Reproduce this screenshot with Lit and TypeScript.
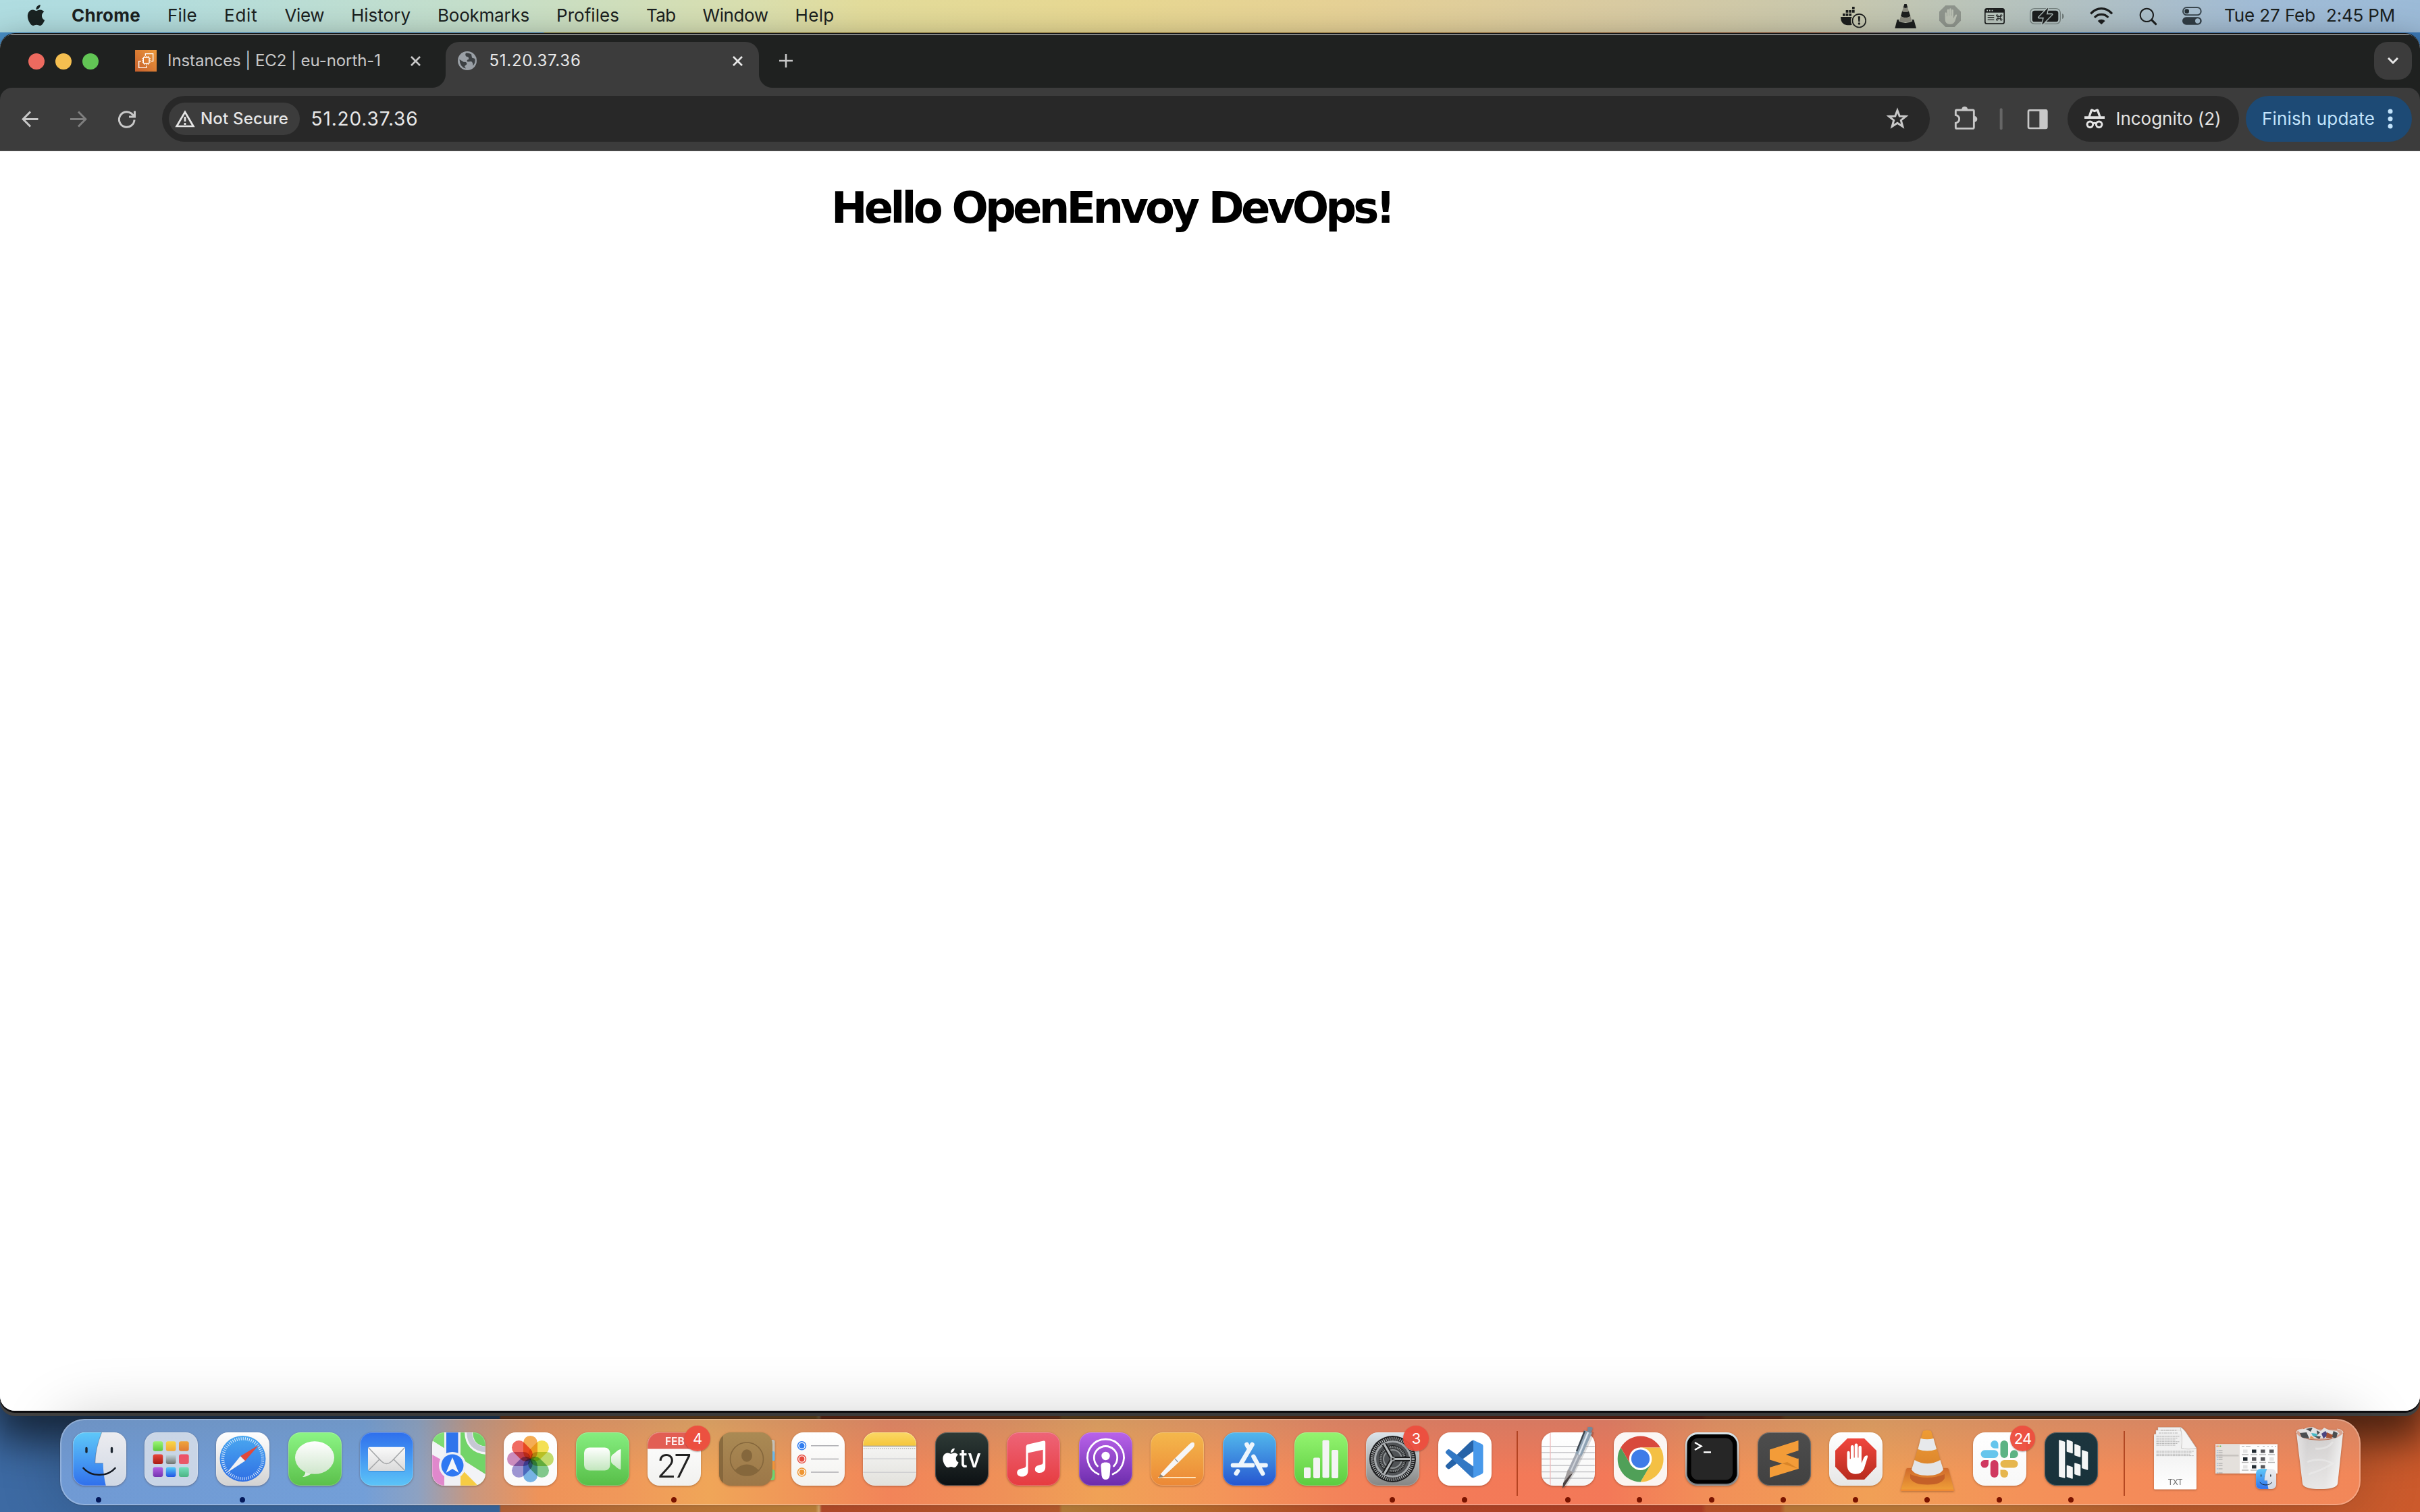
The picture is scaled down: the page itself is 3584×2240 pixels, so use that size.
import { LitElement, html, svg, css } from "lit";
import { customElement, property } from "lit/decorators.js";

/* A single line of text whose tracking is adjusted to fill a set width. */
@customElement("fit-label")
class FitLabel extends LitElement {
  @property({ type: Number }) w = 100;
  @property() text = "";
  static styles = css`
    :host { display: block; flex: none; }
    .box { display: block; white-space: pre; }
    .run { display: inline-block; white-space: pre; }
  `;
  render() {
    return html`<span class="box" style="width:${this.w}px"><span class="run">${this.text}</span></span>`;
  }
  firstUpdated() {
    const run = this.renderRoot.querySelector(".run") as HTMLElement;
    const natural = run.getBoundingClientRect().width;
    if (natural > 0) run.style.letterSpacing = (this.w - natural) / this.text.length + "px";
  }
}

const applePath =
  "M12.152 6.896c-.948 0-2.415-1.078-3.96-1.04-2.04.027-3.91 1.183-4.961 3.014-2.117 3.675-.546 9.103 1.519 12.09 1.013 1.454 2.208 3.09 3.792 3.039 1.52-.065 2.09-.987 3.935-.987 1.831 0 2.35.987 3.96.948 1.637-.026 2.676-1.48 3.676-2.948 1.156-1.688 1.636-3.325 1.662-3.415-.039-.013-3.182-1.221-3.22-4.857-.026-3.04 2.48-4.494 2.597-4.559-1.429-2.09-3.623-2.324-4.39-2.376-2-.156-3.675 1.09-4.61 1.09zM15.53 3.83c.843-1.012 1.4-2.427 1.245-3.83-1.207.052-2.662.805-3.532 1.818-.78.896-1.454 2.338-1.273 3.714 1.338.104 2.715-.688 3.559-1.701";

/* Open hand, drawn in a 34 x 56 box. */
const handPath =
  "M0 18 Q0 14 2.2 14 Q4.6 14 4.6 18 V28 H6 V7 Q6 3 8.6 3 Q11.2 3 11.2 7 V26 H12.4 V4 Q12.4 0 15 0 Q17.6 0 17.6 4 V26 H18.8 V8 Q18.8 4 21.4 4 Q23.8 4 23.8 8 V36 Q26 30 28 25 Q30 21 33.4 22 Q34.6 23 33.6 26 L28 46 Q24 56 14 56 Q0 55 0 38 Z";

const menus: [string, number][] = [
  ["File", 44], ["Edit", 49.5], ["View", 58.5], ["History", 88], ["Bookmarks", 136],
  ["Profiles", 93], ["Tab", 43.5], ["Window", 97], ["Help", 58],
];

const grad = (id: string, a: string, b: string) => svg`
  <linearGradient id=${id} x1="0" y1="0" x2="0" y2="1">
    <stop offset="0" stop-color=${a}></stop><stop offset="1" stop-color=${b}></stop>
  </linearGradient>`;

const tile = (id: string, a: string, b: string, art: unknown) => svg`
  <defs>${grad(id, a, b)}<clipPath id="tileclip"><rect width="79" height="79" rx="18"></rect></clipPath></defs>
  <rect width="79" height="79" rx="18" fill="url(#${id})"></rect>
  <g clip-path="url(#tileclip)">${art}</g>
  <rect x=".5" y=".5" width="78" height="78" rx="17.5" fill="none" stroke="#fff" stroke-opacity=".22"></rect>`;

const finderArt = svg`
  <defs>${grad("fb", "#5ec8f9", "#3070ec")}</defs>
  <path d="M0 0 H42.7 Q33 24 32.8 45.8 H44.7 Q45 64 48.8 79 H0 Z" fill="url(#fb)"></path>
  <path d="M42.7 0 Q33 24 32.8 45.8 H44.7" fill="none" stroke="#2a3c55" stroke-opacity=".35" stroke-width="1"></path>
  <path d="M20 23.5 V29 M57.5 23.5 V29" stroke="#1c2530" stroke-width="3.4" stroke-linecap="round"></path>
  <path d="M15.5 53 Q24 63 39 63 Q54 63 62.5 53" fill="none" stroke="#151b24" stroke-width="2.6" stroke-linecap="round"></path>`;
const finder = tile("fw", "#ececf0", "#d0d8e4", finderArt);

const padColors = [
  ["#9bf575", "#5cc83c"], ["#f8d748", "#f0a838"], ["#efa43c", "#e07a34"],
  ["#e8483c", "#a81c14"], ["#c8dce4", "#707470"], ["#ee5068", "#e85868"],
  ["#b460e4", "#7434b0"], ["#54ccf8", "#2454e4"], ["#74e0bc", "#4cb484"],
];
const launchpad = tile("lp", "#cad6e6", "#c8d4e6", padColors.map((c, i) => svg`
  <defs>${grad("lp" + i, c[0], c[1])}</defs>
  <rect x=${12.6 + (i % 3) * 19.2} y=${13.3 + Math.floor(i / 3) * 19.1} width="14.7" height="14.5" rx="3" fill="url(#lp${i})"></rect>`));

const safari = tile("sf", "#ffffff", "#d2d2d2", svg`
  <defs>${grad("sfc", "#4aa8f0", "#2f6fe4")}</defs>
  <circle cx="39.5" cy="39" r="34" fill="url(#sfc)"></circle>
  <circle cx="39.5" cy="39" r="29.6" fill="none" stroke="#fff" stroke-opacity=".85" stroke-width="4.6" stroke-dasharray="1 2.1"></circle>
  <path d="M63 19 L36 35.2 L43 42.2 Z" fill="#e2483a"></path>
  <path d="M16 60 L36 35.2 L43 42.2 Z" fill="#f2f2f4"></path>`);

const messages = tile("ms", "#8cf585", "#5bc04b", svg`
  <defs>${grad("msb", "#ffffff", "#cfe6cc")}</defs>
  <path d="M21 66 Q26 63 25 57 L34 61 Q28 66 21 66 Z" fill="#e4f2e2"></path>
  <ellipse cx="39" cy="37.5" rx="29" ry="24.3" fill="url(#msb)"></ellipse>`);

const mail = tile("ml", "#2f6fec", "#5cc4f8", svg`
  <defs>${grad("mle", "#fafafa", "#dadada")}</defs>
  <rect x="12" y="23.5" width="55" height="35" rx="2.5" fill="#1c5fb0" opacity=".3"></rect>
  <rect x="12" y="21.7" width="55" height="35.4" rx="2.5" fill="url(#mle)"></rect>
  <path d="M13 23 L32 43 Q39.500 50 47 43 L66 23 M13 56 L29 40 M66 56 L50 40" fill="none" stroke="#a2a4a6" stroke-width="1.5"></path>`);

const maps = tile("mp", "#82e078", "#6cc85c", svg`
  <path d="M0 12 L79 62 V79 H0 Z" fill="#f2f3f6"></path>
  <path d="M0 33 L18 43 V79 H0 Z" fill="#e088cc"></path>
  <path d="M42 53 L68 79 H42 Z" fill="#f6cc44"></path>
  <path d="M42 0 H79 V60 L42 36 Z" fill="#72d468"></path>
  <rect x="18" width="24" height="79" fill="#f0f0f4"></rect>
  <rect x="21" width="17.500" height="40" fill="#2f74ec"></rect>
  <path d="M54 -2 Q54 25 81 27" fill="none" stroke="#f4f4f8" stroke-width="12"></path>
  <path d="M55 -2 Q55 24 81 25.500" fill="none" stroke="#c6c8d4" stroke-width="8"></path>
  <circle cx="30" cy="49" r="18.5" fill="#d4dcf0"></circle>
  <circle cx="30" cy="49" r="20" fill="#eef0f6"></circle>
  <circle cx="30" cy="49" r="16.500" fill="#2f78f2"></circle>
  <path d="M30 37 L39.500 60 L30 54 L20.500 60 Z" fill="#f4f6fa"></path>`);

const petals = ["#f4a03c", "#f2dc3c", "#b8d658", "#70c07c", "#64a8e0", "#8f86cc", "#c47cb4", "#ee564c"];
const photos = tile("ph", "#ffffff", "#fafafa", petals.map((c, i) => svg`
  <rect class="petal" x="29" y="5" width="21" height="35" rx="10.5" fill=${c} fill-opacity=".88" transform="rotate(${i * 45} 39.5 39.5)"></rect>`));

const facetime = tile("ft", "#86ee80", "#57be48", svg`
  <defs>${grad("ftb", "#ffffff", "#c2e6bd")}</defs>
  <rect x="12" y="22.500" width="38.5" height="34" rx="8" fill="url(#ftb)"></rect>
  <path d="M66.500 25 V55 Q63 55 57 49 Q52 46 52 43 V37 Q52 34 57 31 Q63 25 66.500 25 Z" fill="url(#ftb)"></path>`);

const calendar = tile("cl", "#ffffff", "#f1f1ef", svg`
  <rect width="79" height="24.500" fill="#e25e54"></rect>
  <text class="t600" x="26" y="18.500" font-size="15.500" fill="#fdeceb">FEB</text>
  <text class="t300" x="39.500" y="66.500" font-size="47.500" text-anchor="middle" textLength="52" fill="#222">27</text>`);

const contacts = svg`
  <rect x="70" y="11" width="12.5" height="22" rx="3" fill="#c4bfb6"></rect>
  <rect x="70" y="28" width="12.5" height="15" rx="3" fill="#6db8e8"></rect>
  <rect x="70" y="42" width="12.5" height="15" rx="3" fill="#f0943a"></rect>
  <rect x="70" y="55" width="12.500" height="16" rx="4" fill="#6ed470"></rect>
  <defs>${grad("ct", "#aa8a54", "#9c7748")}</defs>
  <rect width="79" height="79" rx="18" fill="url(#ct)"></rect>
  <path d="M6 5 Q0 10 0 18 V61 Q0 70 6 75 Z" fill="#7f6238" opacity=".75"></path>
  <g fill="none" stroke="#85673c" stroke-width="1.600"><circle cx="41" cy="39.500" r="24.500"></circle></g>
  <ellipse cx="41" cy="34.500" rx="8" ry="9.300" fill="#85673c"></ellipse>
  <path d="M23.500 56 Q31 47.500 41 47.500 Q51 47.500 58.500 56 Q51 64 41 64 Q31 64 23.500 56 Z" fill="#85673c"></path>`;

const reminders = tile("rm", "#ffffff", "#f3f2ef", [["#2f7cf0", 19.8], ["#e64b3e", 39.5], ["#ee9634", 59]].map(([c, y]) => svg`
  <circle cx="15.500" cy=${y} r="6" fill="#fff" stroke=${c} stroke-width="1.500"></circle>
  <circle cx="15.500" cy=${y} r="3.900" fill=${c}></circle>
  <rect x="29" y=${(y as number) - 0.8} width="41" height="1.600" fill="#b2b2b6"></rect>`));

const notes = tile("nt", "#fbfbfb", "#e2e1dc", svg`
  <defs>${grad("nty", "#fbd866", "#f5c63a")}</defs>
  <rect width="79" height="20" fill="url(#nty)"></rect>
  <rect y="19.600" width="79" height="1.700" fill="#b0aca0"></rect>
  <path d="M1 24 H79" stroke="#b4b4b0" stroke-width="1.400" stroke-dasharray="1.400 1.600"></path>
  <path d="M0 39.300 H79 M0 59.300 H79" stroke="#d0d0d2" stroke-width="1.400"></path>`);

const tv = tile("tv", "#2e3b37", "#0c1013", svg`
  <g transform="translate(8.700 23.500) scale(1.190)"><path d=${applePath} fill="#fff"></path></g>
  <text class="t500" x="36" y="52" font-size="38" textLength="32" lengthAdjust="spacingAndGlyphs" fill="#fff">tv</text>`);

const music = tile("mu", "#ee6478", "#e63c40", svg`
  <path d="M28.500 22 Q28.500 18.600 31.500 17.800 L54.500 12.600 Q57.200 12 57.200 14.800 V51.500 C57.200 57 53.500 60 48.500 60 C44 60 41.800 57.600 41.800 54.500 C41.800 49.500 47.500 48.600 51 47.800 Q53.600 47.200 53.600 44.500 V25.800 L31.500 30.500 V57 C31.500 62.500 28 65.600 22.800 65.600 C18 65.600 15.200 63 15.200 60 C15.200 55 20 54 24.500 53 Q28.500 52.200 28.500 49 Z" fill="#fff"></path>`);

const podcasts = tile("pc", "#b963ea", "#6c2cac", svg`
  <g fill="none" stroke="#fff" stroke-width="2.800" stroke-linecap="round">
    <path d="M29 62 A27 27 0 1 1 50 62"></path>
    <path d="M27.500 50 A17.200 17.200 0 1 1 51.500 50"></path>
  </g>
  <circle cx="39.500" cy="35" r="6.200" fill="#fff"></circle>
  <path d="M39.500 44.500 C45 44.500 47 46.500 46.500 51 L45.500 64 Q44.500 70 39.500 70 Q34.500 70 33.500 64 L32.500 51 C32 46.500 34 44.500 39.500 44.500 Z" fill="#fff"></path>`);

const pages = tile("pg", "#f4b84c", "#ec8836", svg`
  <path d="M12 67 H66" stroke="#ffe2b8" stroke-width="2.200" stroke-linecap="round"></path>
  <path d="M64 15.500 L17 64 L12 67 L14 61.500 L38 37 Z" fill="#a85c18" opacity=".25" transform="translate(3 2)"></path>
  <path d="M58 17 Q62 13.500 64.500 15.500 Q66 19 63 23 L41 45 L19 65.500 L14.500 62 L35 39.500 Z" fill="#f6f6f6"></path>
  <path d="M14.500 62 L19 65.500 L12 67.500 Z" fill="#8d8477"></path>
  <path d="M36 39 L40.500 44" stroke="#9a9a9a" stroke-width="1.400"></path>`);

const appstore = tile("as", "#52b8ec", "#2656d0", svg`
  <g stroke="#eef6fc" stroke-width="6.600" stroke-linecap="round" fill="none">
    <path d="M43.500 18 L26.500 47"></path><path d="M35.500 18 L37 21"></path>
    <path d="M45.500 36 L59 61"></path><path d="M15 48.700 H44 M54 48.700 H63.500"></path>
    <path d="M22 57.500 L19.800 60.800"></path>
  </g>`);

const numbers = tile("nb", "#94f470", "#5ccc40", [[14, 52, 16], [28, 37.5, 30.5], [41.5, 11.5, 56], [55, 26, 42]].map(([x, y, h]) => svg`
  <rect x=${x} y=${y} width="10" height=${h} rx="2" fill="#f3f4f4"></rect>`));

const settings = tile("st", "#dbe4ea", "#868684", svg`
  <circle cx="39.500" cy="39.500" r="34.500" fill="#1e1f21"></circle>
  <circle cx="39.500" cy="39.500" r="30.300" fill="none" stroke="#b8bcbe" stroke-width="4.400" stroke-dasharray="1.300 1.700"></circle>
  <circle cx="39.500" cy="39.500" r="26" fill="#505356" stroke="#a4a8ab" stroke-width="3.200"></circle>
  <circle cx="39.500" cy="39.500" r="19.500" fill="#3e4042" stroke="#1c1d1e" stroke-width="2"></circle>
  <circle cx="39.500" cy="39.500" r="18" fill="none" stroke="#8c9092" stroke-width="3.200" stroke-dasharray="1.300 1.300"></circle>
  <circle cx="39.500" cy="39.500" r="13.500" fill="#505356" stroke="#909496" stroke-width="2"></circle>
  <path d="M39.500 39.500 H65 M39.500 39.500 L27 17.500 M39.500 39.500 L27 61.500" stroke="#1c1d1e" stroke-width="7"></path>
  <path d="M39.500 39.500 H65 M39.500 39.500 L27 17.500 M39.500 39.500 L27 61.500" stroke="#b6babc" stroke-width="3.200"></path>
  <circle cx="39.500" cy="39.500" r="3.500" fill="#9a9ea0"></circle><circle cx="39.500" cy="39.500" r="1.400" fill="#222"></circle>`);

const vscode = tile("vs", "#ffffff", "#ffffff", svg`
  <path d="M52 11.500 V28 L17 54 Q15 55 13.500 53.500 L11.500 51.500 Q10 49.500 12 48 L47.500 14 Q49.500 12 52 11.500 Z" fill="#2663a8"></path>
  <path d="M52 67.500 V50.500 L17 25.500 Q15 24.500 13.500 26 L11.500 28 Q10 30 12 31.500 L47.500 65 Q49.500 67 52 67.500 Z" fill="#3278c4"></path>
  <path d="M52 11.500 L65 17.500 Q66.500 18.500 66.500 20.500 V58.500 Q66.500 60.500 65 61.500 L52 67.500 Z" fill="#4899ea"></path>`);

const textedit = svg`
  ${tile("te", "#ffffff", "#f6f6f6", svg`
    <path d="M0 20.800 H79 M0 30 H79 M0 39.500 H79 M0 49 H79 M0 58.600 H79 M0 68 H79" stroke="#c2c2c6" stroke-width="1.500"></path>
    <path d="M13 0 V79" stroke="#eebcbc" stroke-width="1.300"></path>`)}
  <path d="M66 -4 L75 -1 L72 8 L46 60 L33.500 79 L30.500 83 L31 77 L38 55 L53 26 Z" fill="#000" opacity=".13" transform="translate(3 1)"></path>
  <path d="M63.500 -3 L75 .5 L59 36 L50 32 Z" fill="#8fa3b4"></path>
  <path d="M68.500 -8 H74 L76 -6 L73 1 L68 -1 Z" fill="#75889a"></path>
  <path d="M64 -2 L52 28" stroke="#3c4650" stroke-width="2.400"></path>
  <path d="M69 0 L55 34" stroke="#dce6f0" stroke-width="2.500"></path>
  <path d="M50.500 31 L59 34.500 L47.500 60 L39 56 Z" fill="#a3a8b2"></path>
  <path d="M54 34 L43.500 57" stroke="#d0d4da" stroke-width="2"></path>
  <path d="M39 55 L47 59.500 L37 75 L32.500 74 Z" fill="#a09c9c"></path>
  <path d="M42 63 L46 61 L34.500 79 L31 83 L32 75 Z" fill="#4c4444"></path>`;

const chrome = tile("ch", "#fbf6f4", "#fbf4f0", svg`
  <path d="M10.300 22.400 A34 34 0 0 1 69 22.400 H39.500 L25 48 Z" fill="#d8493c"></path>
  <path d="M69 22.400 A34 34 0 0 1 39.500 73.500 L54.500 48 L39.500 22.400 Z" fill="#f4c044"></path>
  <path d="M39.500 73.500 A34 34 0 0 1 10.300 22.400 L25 48 L54.500 48 Z" fill="#50a058"></path>
  <circle cx="39.500" cy="39.200" r="16.800" fill="#fff"></circle>
  <circle cx="39.500" cy="39.200" r="13.600" fill="#3f7ce8"></circle>`);

const terminal = tile("tm", "#d6e4ea", "#77797b", svg`
  <rect x="2.500" y="3" width="74" height="73" rx="15.500" fill="#000"></rect>
  <rect x="8.500" y="8.500" width="61.500" height="62" rx="10" fill="#262626"></rect>
  <path d="M14 15 L23.500 20.500 L14 26" fill="none" stroke="#fff" stroke-width="2.500"></path>
  <path d="M27 29.500 H38" stroke="#fff" stroke-width="2.500"></path>`);

const sublime = tile("su", "#4d4d4d", "#414141", svg`
  <path d="M18 25.500 L60.500 12 V27 L42 33 L60.500 39.500 V54 L18 40.500 Z" fill="#f39c38"></path>
  <path d="M18 52 L60.500 38.500 V54 L18 67 Z" fill="#f39c38"></path>
  <path d="M36 46 L60.500 54 L44 44 Z" fill="#d98528"></path>
  <path d="M17 42 L35 46.800 L17 51.500 Z" fill="#474747"></path>`);

const adblock = tile("ab", "#ffffff", "#e6e6e6", svg`
  <defs>${grad("abr", "#f0463e", "#b82c1e")}</defs>
  <path d="M27 9 H52 L70 27 V51 L52 70 H27 L9 51 V27 Z" fill="url(#abr)"></path>
  <path d=${handPath} fill="#fff" transform="translate(26.500 16.500) scale(.9 .81)"></path>`);

const vlc = svg`
  <defs>${grad("vlb", "#d06a2c", "#f0a038")}${grad("vlo", "#ee9c34", "#d8802c")}</defs>
  <path d="M10 53 H69 Q70.500 53 71 55 L79 86 H0 L8 55 Q8.500 53 10 53 Z" fill="url(#vlb)"></path>
  <path d="M14 62 Q39 72 65 62 V68 Q60 77.500 39.500 77.500 Q19 77.500 14 68 Z" fill="#c46028"></path>
  <path d="M33 -2 Q39 -4 45 -2 L63 55 Q58 64 39.500 64 Q21 64 16 55 Z" fill="url(#vlo)"></path>
  <path d="M29.500 9 Q39 11.500 48.500 9 L53 25 Q39 30 25.500 25 Z" fill="#e7e9eb"></path>
  <path d="M20.500 41 Q39 51.500 58.500 41 L63 55 Q58 64 39.500 64 Q21 64 16 55 Z" fill="#e3e5e8"></path>
  <path d="M0 84.500 H79 V87 H0 Z" fill="#ee8a34"></path>`;

const slack = tile("sl", "#ffffff", "#f8f8f8", svg`
  <g fill="#66c5ec"><path d="M32 12 A5.800 5.800 0 0 0 32 23.800 H37.500 V18 A5.700 5.700 0 0 0 32 12 Z"></path><rect x="11.500" y="26.200" width="26" height="11.800" rx="5.900"></rect></g>
  <g fill="#5cb384"><rect x="40.500" y="12" width="11.500" height="26" rx="5.750"></rect><path d="M55 38 V32 A5.900 5.900 0 1 1 61 38 Z"></path></g>
  <g fill="#e6b64e"><rect x="40.500" y="41" width="26" height="11.500" rx="5.750"></rect><path d="M40.500 55.500 H46.500 A5.800 5.800 0 1 1 40.500 61.500 Z"></path></g>
  <g fill="#d03860"><rect x="25.800" y="41" width="11.700" height="26" rx="5.800"></rect><path d="M23 41 V47 A5.800 5.800 0 1 1 17 41 Z"></path></g>`);

const dashlane = tile("dl", "#1c353e", "#18323b", svg`
  <g fill="#f4f6f6" stroke="#f4f6f6" stroke-width="1.600" stroke-linejoin="round">
    <path d="M22 12 L29.500 14.500 V67 L22 65 Z"></path>
    <path d="M33.500 11.500 L41 14.500 V30.500 L33.500 28 Z"></path>
    <path d="M45 18 L52.500 21 V36 L45 33.500 Z"></path>
    <path d="M56 27 L63.500 29.500 V55 L56 52.500 Z"></path>
    <path d="M45 46 L52.500 48.500 V64 L45 61.500 Z"></path>
    <path d="M33.500 49.500 L41 52 V68 L33.500 65.500 Z"></path>
  </g>`);

const rows = (x: number, y: number, w: number, n: number, step: number) =>
  Array.from({ length: n }, (_, i) => svg`<path d="M${x} ${y + i * step} h${w - (i % 3) * 3}" stroke="#9a9a9a" stroke-width=".7" stroke-dasharray="4 .8 2.500 .7"></path>`);

const txt = svg`
  <defs>${grad("tx", "#ececec", "#ffffff")}</defs>
  <path d="M14 -7.500 H48 L62 12 V40 H14 Z" fill="#f0f0f0" stroke="#c8c0bc" stroke-width=".5"></path>
  <path d="M11 -3 H47 L66 20 V60 H11 Z" fill="#f2f2f2" stroke="#c8c0bc" stroke-width=".5"></path>
  <path d="M9 2.500 H48 V24 H71 V83 Q71 84.500 69.500 84.500 H9.500 Q8 84.500 8 83 V4 Q8 2.500 9 2.500 Z" fill="url(#tx)"></path>
  ${rows(18, -3, 24, 1, 2)}${rows(15, 1, 28, 1, 2)}${rows(11.5, 6, 34, 6, 2.6)}${rows(11.5, 28, 56, 4, 2.2)}
  <path d="M47 -7.500 Q52 -6 58 4 L71 23.500 Q58 26 48.500 23.500 Q51 8 47 -7.500 Z" fill="#f4f4f4" stroke="#b8b4b0" stroke-width=".7"></path>
  <text class="t400" x="39.500" y="78" font-size="11.800" text-anchor="middle" textLength="22" fill="#6e6e6e">TXT</text>`;

const windowThumb = svg`
  <rect x="-7" y="17.500" width="92" height="43.500" fill="#fdfdfd"></rect>
  <rect x="-7" y="17.500" width="36" height="43.500" fill="#e4e0dc"></rect>
  <circle cx="-4.500" cy="20.500" r="1" fill="#e8584c"></circle><circle cx="-2" cy="20.500" r="1" fill="#f0b83c"></circle><circle cx=".5" cy="20.500" r="1" fill="#58b84c"></circle>
  <rect x="-6" y="33" width="33.500" height="2.600" fill="#c8c4c0"></rect>
  ${[27, 30, 33.500, 37, 40, 46, 49, 54, 60].map((y) => svg`<path d="M-5 ${y} h1.500" stroke="#58a0e0" stroke-width="1"></path><path d="M-2.500 ${y} h6" stroke="#9a9a9a" stroke-width=".9"></path>`)}
  <path d="M32 20.500 h4 M38 20.500 h7 M55 20.500 h3 M63 20.500 h3 M70 20.500 h2 M76 20.500 h2 M81 20.500 h2" stroke="#a8a8a8" stroke-width="1"></path>
  ${[0, 1, 2, 3].map((c) => [0, 1, 2].map((r) => (c === 3 && r === 2) ? "" : svg`
    <rect x=${34 + c * 13} y=${25.500 + r * 11.500} width="6.500" height="5" fill=${(c === 0 && r === 1) || (c === 1 && r !== 1) ? "#222b32" : (c === 0 || (c === 3 && r === 1) ? "#e4e4e4" : "#58585c")}></rect>
    <path d="M${32 + c * 13} ${33 + r * 11.500} h10" stroke="#b4b4b4" stroke-width="1.400"></path>`))}
  <g transform="translate(53 54) scale(.38)">${finder}</g>`;

const trash = svg`
  <defs>
    <linearGradient id="tr" x1="0" y1="0" x2="1" y2=".1"><stop offset="0" stop-color="#e4e2e2"></stop><stop offset=".25" stop-color="#cfcdcd"></stop><stop offset=".7" stop-color="#d2cfce"></stop><stop offset="1" stop-color="#ececec"></stop></linearGradient>
    ${grad("trb", "rgba(255,255,255,0)", "rgba(255,255,255,.5)")}
  </defs>
  <path d="M6 0 Q6 -4 14 -5 L70 -4 Q75 -2 75 1 Q72 10 40 11 Q8 10 6 0 Z" fill="#d7a592"></path>
  <path d="M8 -3 L17 -5 L22 -7 L30 -8 L36 -5 L42 -2 L47 -7 L55 -3 L66 -2 L70 2 L60 9 H20 Z" fill="#e2e2e2"></path>
  <path d="M20 -5 L30 -7 L27 -1 Z M11 1 L21 0 L25 9 L14 8 Z M61 -2 L67 1 L65 9 L58 7 Z M36 -3 L41 0 L37 4 Z M30 5 L42 6 L40 10 Z" fill="#4a4e50"></path>
  <path d="M28 1 L36 2 L37 6 L30 5 Z" fill="#46b8c4"></path><path d="M27 5 L33 9 H26 Z" fill="#e4904c"></path>
  <path d="M43 2 L49 -2 L53 4 L46 9 Z" fill="#4c4680"></path><path d="M51 0 L60 4 L58 9 L50 8 Z" fill="#a85434"></path>
  <path d="M6 1 Q12 11 40 12 Q68 11 75 1 L67 76 Q65 84 41 84 Q17 84 15 76 Z" fill="url(#tr)"></path>
  <path d="M6 1 Q12 11 40 12 Q68 11 75 1 L67 76 Q65 84 41 84 Q17 84 15 76 Z" fill="url(#trb)"></path>
  <path d="M34 24 Q52 26 60 14 M22 44 Q40 36 60 46 Q44 56 24 62" fill="none" stroke="#eee" stroke-width="3" opacity=".5"></path>
  <path d="M6 1 Q6 -5 16 -5 M66 -5 Q75 -4 75 1" fill="none" stroke="#ece6e4" stroke-width="1.200" opacity=".8"></path>`;

interface App { art: unknown; run?: boolean; badge?: string }
const groups: App[][] = [
  [
    { art: finder, run: true }, { art: launchpad }, { art: safari, run: true }, { art: messages }, { art: mail },
    { art: maps }, { art: photos }, { art: facetime }, { art: calendar, run: true, badge: "4" }, { art: contacts },
    { art: reminders }, { art: notes }, { art: tv }, { art: music }, { art: podcasts }, { art: pages },
    { art: appstore }, { art: numbers }, { art: settings, run: true, badge: "3" }, { art: vscode, run: true },
  ],
  [
    { art: textedit, run: true }, { art: chrome, run: true }, { art: terminal, run: true }, { art: sublime, run: true },
    { art: adblock, run: true }, { art: vlc, run: true }, { art: slack, run: true, badge: "24" }, { art: dashlane, run: true },
  ],
  [{ art: txt }, { art: windowThumb }, { art: trash }],
];

@customElement("dock-item")
class DockItem extends LitElement {
  @property({ attribute: false }) app: App = { art: "" };
  static styles = css`
    :host { display: block; width: 79px; flex: none; }
    .item { display: flex; flex-direction: column; align-items: center; gap: 17.500px; position: relative; }
    .art { width: 79px; height: 79px; overflow: visible; filter: drop-shadow(0 1.500px 1.500px rgba(60, 20, 0, 0.35)); }
    .dot { width: 8px; height: 8px; border-radius: 50%; background: var(--dot, #7a1400); margin-right: 1.500px; }
    .badge { position: absolute; left: 55px; top: -9.500px; width: 37.500px; height: 37.500px; border-radius: 50%; background: rgba(236, 78, 62, 0.96); color: #fff; display: flex; align-items: center; justify-content: center; font: 400 22px/1 Inter, "Liberation Sans", sans-serif; letter-spacing: -0.800px; box-shadow: 0 1px 2px rgba(0, 0, 0, 0.3); }
    .petal { mix-blend-mode: multiply; }
    text { font-family: Inter, "Liberation Sans", sans-serif; }
    .t300 { font-weight: 300; } .t400 { font-weight: 400; } .t500 { font-weight: 500; } .t600 { font-weight: 700; }
  `;
  render() {
    const a = this.app;
    return html`<div class="item">
      <svg class="art" viewBox="0 0 79 79">${a.art}</svg>
      ${a.run ? html`<span class="dot"></span>` : ""}
      ${a.badge ? html`<span class="badge">${a.badge}</span>` : ""}
    </div>`;
  }
}

@customElement("mac-dock")
class MacDock extends LitElement {
  static styles = css`
    :host { display: block; }
    .dock { box-sizing: border-box; display: flex; gap: 27.450px; height: 128px; width: 3407px; margin-left: 88.500px; padding: 17.500px 0 0 17px; border-radius: 36px; border: 2px solid rgba(255, 255, 255, 0.24); background-clip: border-box; background-origin: border-box;
      background-image: linear-gradient(180deg, rgba(110, 120, 130, 0.22), rgba(255, 140, 90, 0.02) 65%), linear-gradient(90deg, #6d9ad6 0, #709fda 450px, #8ba2c4 530px, #c8977f 610px, #ef9359 710px, #f0985a 830px, #f0a658 960px, #f09558 1100px, #f28459 1230px, #ef9158 1400px, #f0a256 1540px, #f49559 1720px, #f3845a 1880px, #f37a58 2060px, #f37858 2290px, #f29058 2450px, #f1a056 2680px, #f49259 2900px, #f48a59 3100px, #f28759 3408px);
      box-shadow: 0 0 1px 1px rgba(40, 20, 10, 0.15), 0 0 90px rgba(0, 0, 0, 0.22); }
    .rule { width: 2px; height: 96px; margin: -1.500px 7.500px 0 10px; background: rgba(160, 50, 15, 0.75); flex: none; }
    .cool { --dot: #04195a; }
  `;
  render() {
    return html`<div class="dock">
      ${groups.map((g, gi) => html`${gi ? html`<span class="rule"></span>` : ""}${g.map((a, i) => html`<dock-item class=${gi === 0 && i < 3 ? "cool" : ""} .app=${a}></dock-item>`)}`)}
    </div>`;
  }
}

@customElement("menu-bar")
class MenuBar extends LitElement {
  static styles = css`
    :host { display: block; }
    .bar { box-sizing: border-box; height: 48px; padding: 0 37px 0 38px; display: flex; align-items: center; color: #1b211f; font: 400 26px/40px Inter, "Liberation Sans", sans-serif;
      background: linear-gradient(90deg, #b0dde1 0, #b2dddf 200px, #c5dfcb 700px, #dadfae 1120px, #e3dc9b 1280px, #e8d892 1650px, #e6d196 2000px, #d9cba2 2400px, #c8c8ae 2720px, #b8c4bd 2960px, #acbfca 3180px, #a1bcd6 3340px, #9cbbd8 3584px); }
    .left { display: flex; gap: 40px; padding-bottom: 3px; }
    .apple { width: 31px; height: 31px; margin: -4px 37px 0 0; flex: none; }
    .bold { font-weight: 700; }
    .right { display: flex; align-items: center; margin-left: auto; }
    .icons { width: 546px; height: 48px; flex: none; }
    .clock { display: flex; gap: 16px; margin-left: 28px; padding-bottom: 3px; }
  `;
  render() {
    return html`<div class="bar">
      <svg class="apple" viewBox="0 0 24 24"><path d=${applePath} fill="#1a2322"></path></svg>
      <div class="left">
        <fit-label class="bold" text="Chrome" w="102"></fit-label>
        ${menus.map(([t, w]) => html`<fit-label text=${t} w=${w}></fit-label>`)}
      </div>
      <div class="right">
        <svg class="icons" viewBox="0 0 1638 144" fill="#1c1e1e">
          <path d="M27 60h11v11H27zM41 60h11v11H41zM55 60h11v11H55zM41 45h11v11H41zM55 45h11v11H55zM69 45h11v11H69zM69 30h11v11H69z"></path>
          <path d="M18 75 H68 Q62 84 63 94 Q64 104 68 110 Q56 113 43 111 Q18 107 18 75 Z"></path>
          <circle cx="100" cy="92" r="29.500" fill="none" stroke="#1c1e1e" stroke-width="5"></circle>
          <path d="M95 73 h10 l-2 24 h-6 z"></path><circle cx="100" cy="105" r="5"></circle>
          <path d="M301 18 H311 L316 34 Q306 38 296 34 Z"></path>
          <path d="M296 34 Q306 38 316 34 L321 50 Q306 57 291 50 Z" fill="#8a8a7e"></path>
          <path d="M291 50 Q306 57 321 50 L328 72 Q306 86 285 72 Z"></path>
          <path d="M285 72 Q306 86 328 72 L334 92 Q324 99 306 99 Q288 99 279 92 Z" fill="#8a8a7e"></path>
          <path d="M269 87 H277 L276 94 Q290 102 306 102 Q324 102 337 94 L335 87 H343 L354 126 H259 Z"></path>
          <path d="M484 24 H524 L552 52 V92 L524 120 H484 L456 92 V52 Z" fill="#8f958d"></path>
          <path d=${handPath} fill="#bcc2b5" transform="translate(482 37) scale(1.550 1.270)"></path>
          <rect x="659.500" y="38.500" width="85" height="67" rx="8" fill="none" stroke="#1c1e1e" stroke-width="5"></rect>
          <path d="M660 40 H744 V56 H660 Z"></path>
          <path d="M667 47 h5 M678 47 h5 M689 47 h5" stroke="#bac5bf" stroke-width="5"></path>
          <path d="M671 68 h29 M671 78 h29 M671 88 h29" stroke="#1c1e1e" stroke-width="4"></path>
          <path d="M717 73 h10 v10 h-10 z M717 73 h-4 a4 4 0 1 1 4 -4 z M727 73 v-4 a4 4 0 1 1 4 4 z M727 83 h4 a4 4 0 1 1 -4 4 z M717 83 v4 a4 4 0 1 1 -4 -4 z" fill="none" stroke="#1c1e1e" stroke-width="3"></path>
          <rect x="860" y="38" width="134" height="68" rx="19" fill="none" stroke="#747f7d" stroke-width="4"></rect>
          <path d="M1002 60 Q1010 63 1010 72 Q1010 81 1002 84 Z" fill="#747f7d"></path>
          <rect x="869" y="47" width="116" height="50" rx="11"></rect>
          <path d="M938 36 L898 78 H921 L913 110 L957 64 H933 Z" stroke="#b5c3c2" stroke-width="9" stroke-linejoin="round" fill="#b5c3c2"></path>
          <path d="M938 37 L899 77 H922 L914 108 L956 65 H932 Z" stroke="#1c1e1e" stroke-width="2" stroke-linejoin="round"></path>
          <g fill="none" stroke="#1c1e1e" stroke-width="9.500">
            <path d="M1129 61 Q1150 38 1176.500 38 Q1203 38 1224 61"></path><path d="M1146 78 Q1158 64 1176.500 64 Q1195 64 1207 78"></path>
          </g>
          <path d="M1160 93 Q1167 86 1176.500 86 Q1186 86 1193 93 L1176.500 109 Z"></path>
          <circle cx="1378" cy="67" r="29" fill="none" stroke="#1c1e1e" stroke-width="6"></circle>
          <path d="M1400 89 L1418 107" stroke="#1c1e1e" stroke-width="9" stroke-linecap="round"></path>
          <rect x="1539" y="33" width="80" height="34" rx="17" fill="none" stroke="#3b4850" stroke-width="6"></rect>
          <circle cx="1556" cy="50" r="10" fill="#263036"></circle>
          <rect x="1536" y="76" width="86" height="34" rx="17" fill="#313c44"></rect>
          <circle cx="1604" cy="93" r="11" fill="#a6bed0"></circle>
        </svg>
        <div class="clock"><fit-label text="Tue 27 Feb" w="135"></fit-label><fit-label text="2:45 PM" w="102"></fit-label></div>
      </div>
    </div>`;
  }
}

@customElement("browser-window")
class BrowserWindow extends LitElement {
  static styles = css`
    :host { display: block; }
    .window { height: 2040px; margin-top: 2px; border-radius: 22px; background: #fff; display: flex; flex-direction: column; font: 400 24px/32px Inter, "Liberation Sans", sans-serif; overflow: hidden; }
    .frame { border-radius: 22px; margin: 0; box-shadow: 0 -1px 0 #050505, 0 3px 0 #0d0d10, 0 8px 0 #414141, 0 34px 60px 12px rgba(0, 0, 0, 0.62); }
    .strip { box-sizing: border-box; height: 80px; background: #1f2120; border-top: 2px solid #858787; display: flex; align-items: flex-start; padding: 10px 12px 0 42px; flex: none; }
    .lights { display: flex; gap: 16px; margin-top: 17px; }
    .light { width: 24px; height: 24px; border-radius: 50%; }
    .red { background: #ed6a5f; } .yellow { background: #f5bf50; } .green { background: #62c655; }
    .tab { height: 68px; display: flex; align-items: center; box-sizing: border-box; color: #c8c8c8; }
    .tab.idle { margin-left: 54px; width: 460px; padding: 0 0 12px 0; }
    .tab.active { width: 464px; padding: 0 23px 12px 18px; background: #3c3c3c; color: #e8e8e8; border-radius: 20px 20px 0 0; }
    .flare { width: 20px; height: 20px; margin-top: 48px; flex: none; }
    .flare.l { margin-left: -20px; background: radial-gradient(circle at 0 0, transparent 19.500px, #3c3c3c 20.500px); }
    .flare.r { background: radial-gradient(circle at 100% 0, transparent 19.500px, #3c3c3c 20.500px); }
    .fav { width: 32px; height: 32px; margin-right: 16px; flex: none; }
    .globe { width: 28px; height: 28px; margin-right: 18.500px; flex: none; }
    .x { width: 17px; height: 17px; flex: none; }
    .tab.idle .x { margin-left: 43px; }
    .tab.active .x { margin-left: auto; }
    .plus { width: 20px; height: 20px; margin: 18px 0 0 10px; }
    .more { margin-left: auto; width: 56px; height: 56px; border-radius: 20px; background: #3c3c3c; display: flex; align-items: center; justify-content: center; }
    .under { background: #1f2120; flex: none; }
    .tools { box-sizing: border-box; height: 94px; background: #3c3c3c; border-bottom: 2px solid #474747; border-radius: 18px 18px 0 0; display: flex; align-items: center; padding: 0 11px 0 32px; }
    .nav { width: 170px; height: 27px; flex: none; margin-right: 38px; }
    .omni { box-sizing: border-box; width: 2618px; height: 68px; border-radius: 34px; background: #282828; display: flex; align-items: center; padding: 0 31px 0 10px; flex: none; }
    .chip { box-sizing: border-box; width: 194px; height: 48px; border-radius: 24px; background: #3c3c3c; display: flex; align-items: center; gap: 8px; padding-left: 9px; color: #e6e6e6; font-weight: 500; margin-right: 16.500px; }
    .warn { width: 30px; height: 26px; flex: none; }
    .url { font-size: 28px; color: #e8e8e8; }
    .star { width: 34px; height: 34px; margin-left: auto; }
    .ext { width: 142px; height: 38px; margin: 0 27.500px 0 34.500px; flex: none; }
    .incog { box-sizing: border-box; width: 254px; height: 68px; border-radius: 34px; background: #282828; color: #e3e3e3; display: flex; align-items: center; gap: 16.500px; padding-left: 25px; font-size: 26px; flex: none; }
    .spy { width: 30px; height: 30px; flex: none; }
    .update { box-sizing: border-box; width: 246px; height: 68px; border-radius: 34px; background: #1d4a75; color: #c2e3fb; display: flex; align-items: center; padding: 0 28px 0 24px; margin-left: 10px; font-size: 26px; justify-content: space-between; flex: none; }
    .dots { width: 8px; height: 30px; flex: none; }
    .page { flex: 1; background: #fff; padding: 44px 0 0 1231px; }
    h1 { margin: 0; color: #000; font: 700 64px/80px "DejaVu Sans", sans-serif; }
  `;
  render() {
    const x = html`<svg class="x" viewBox="0 0 17 17"><path d="M2 2 L15 15 M15 2 L2 15" stroke="currentColor" stroke-width="2.600"></path></svg>`;
    return html`<div class="frame"><div class="window">
      <div class="strip">
        <div class="lights"><span class="light red"></span><span class="light yellow"></span><span class="light green"></span></div>
        <div class="tab idle">
          <svg class="fav" viewBox="0 0 96 96">
            <defs><linearGradient id="aws" x1="0" y1="1" x2="1" y2="0"><stop offset="0" stop-color="#c55f2c"></stop><stop offset="1" stop-color="#ee9a3b"></stop></linearGradient></defs>
            <rect width="96" height="96" fill="url(#aws)"></rect>
            <g fill="none" stroke="#fff" stroke-width="4">
              <path d="M46 26 V17 H80 V50 H71"></path><path d="M27 50 H17 V79 H50 V70"></path>
              <rect x="37" y="33" width="26" height="27" rx="3"></rect>
              <path d="M42 32 V27 M50 32 V27 M58 32 V27 M42 61 V66 M50 61 V66 M58 61 V66 M36 38 H31 M36 46 H31 M36 54 H31 M64 38 H69 M64 46 H69 M64 54 H69" stroke-width="3"></path>
            </g>
          </svg>
          <fit-label text="Instances | EC2 | eu-north-1" w="316"></fit-label>${x}
        </div>
        <span class="flare l"></span>
        <div class="tab active">
          <svg class="globe" viewBox="0 0 28 28"><circle cx="14" cy="14" r="14" fill="#9aa0a6"></circle>
            <path d="M2.500 12 L9 16 Q13 15 13.500 19 L10 22 L12 25.600 Q3 23.500 2.500 12 Z M12 2.600 Q10 6 13 8 Q17 8 16 12 Q12 13 14.500 15.500 L20 15 Q23 17 22.500 21.500 Q26.500 17 25.400 11 L21 9.500 L20 4.200 Q16 2 12 2.600 Z" fill="#3c4043"></path></svg>
          <fit-label text="51.20.37.36" w="136"></fit-label>${x}
        </div>
        <span class="flare r"></span>
        <svg class="plus" viewBox="0 0 20 20"><path d="M10 0 V20 M0 10 H20" stroke="#c8c8c8" stroke-width="2.600"></path></svg>
        <span class="more"><svg width="18" height="12" viewBox="0 0 18 12"><path d="M2 2 L9 9 L16 2" fill="none" stroke="#e8e8e8" stroke-width="3"></path></svg></span>
      </div>
      <div class="under"><div class="tools">
        <svg class="nav" viewBox="0 0 170 27" fill="none" stroke="#c8c8c8" stroke-width="3">
          <path d="M13 2.500 L2.200 13.500 L13 24.500 M2.200 13.500 H24.500"></path>
          <path d="M84 2.500 L94.800 13.500 L84 24.500 M94.800 13.500 H72" stroke="#7e7e7e"></path>
          <path d="M167 14.500 A11.300 11.300 0 1 1 162.500 5 L167 9.500"></path><path d="M167.500 1.500 V10 H159"></path>
        </svg>
        <div class="omni">
          <div class="chip">
            <svg class="warn" viewBox="0 0 30 26"><path d="M15 3 L27.300 24 H2.700 Z" fill="none" stroke="#e6e6e6" stroke-width="2.700"></path><path d="M15 10 V17 M15 19 V22" stroke="#e6e6e6" stroke-width="2.800"></path></svg>
            <fit-label text="Not Secure" w="130"></fit-label>
          </div>
          <fit-label class="url" text="51.20.37.36" w="159"></fit-label>
          <svg class="star" viewBox="0 0 34 34"><path d="M17 4.500 L20.200 13 L29.500 13.400 L22.300 19.200 L24.800 28.300 L17 23.200 L9.200 28.300 L11.700 19.200 L4.500 13.400 L13.800 13 Z" fill="none" stroke="#c8c8c8" stroke-width="3"></path></svg>
        </div>
        <svg class="ext" viewBox="520 470 426 114">
          <path d="M534 488 H606 Q611 488 611 493 V565 Q611 570 606 570 H534 Q530 570 530 565 V546 Q546 542 546 528 Q546 514 530 510 V493 Q530 488 534 488 Z" fill="none" stroke="#c8c8c8" stroke-width="8.500"></path>
          <path d="M556 488 Q557 472 570 472 Q583 472 584 488 Z M612 514 Q626 516 626 528 Q626 540 612 542 Z" fill="#c8c8c8"></path>
          <rect x="726" y="480" width="12" height="96" rx="6" fill="#666"></rect>
          <rect x="853" y="489" width="82" height="80" rx="6" fill="none" stroke="#c8c8c8" stroke-width="8"></rect><rect x="902" y="486" width="35" height="86" rx="5" fill="#c8c8c8"></rect>
        </svg>
        <div class="incog">
          <svg class="spy" viewBox="1101 482 90 90" fill="#e3e3e3">
            <path d="M1101 516 H1191 V527 H1101 Z M1118 516 L1127 488 Q1131 481 1138 484 L1146 488 L1154 484 Q1161 481 1165 488 L1174 516 H1164 L1156 494 L1146 498 L1136 494 L1128 516 Z"></path>
            <g fill="none" stroke="#e3e3e3" stroke-width="9"><circle cx="1126" cy="552" r="13"></circle><circle cx="1166" cy="552" r="13"></circle><path d="M1138 549 Q1146 543 1154 549"></path></g>
          </svg>
          <fit-label text="Incognito (2)" w="156"></fit-label>
        </div>
        <div class="update"><fit-label text="Finish update" w="167"></fit-label>
          <svg class="dots" viewBox="0 0 8 30" fill="#c2e3fb"><circle cx="4" cy="4" r="3.500"></circle><circle cx="4" cy="15" r="3.500"></circle><circle cx="4" cy="26" r="3.500"></circle></svg>
        </div>
      </div></div>
      <div class="page"><h1><fit-label text="Hello OpenEnvoy DevOps!" w="831"></fit-label></h1></div>
    </div></div>`;
  }
}

@customElement("app-root")
class AppRoot extends LitElement {
  static styles = css`
    :host { display: block; width: 3584px; height: 2240px; overflow: hidden; }
    .desktop { width: 3584px; height: 2240px; overflow: hidden; background:
      linear-gradient(90deg, #4b93cc 0, #3f7fb8 805px, #8c8340 806px, #a2803e 2000px, #8a4a30 2700px, #2d64a4 2900px, #3e7cba 3584px) 0 0 / 3584px 80px no-repeat,
      linear-gradient(90deg, #3d6aa3 0, #3c6ca6 739px, #bd683b 742px, #c87c3a 1000px, #c8883c 1208px, #e0b070 1213px, #be4f2c 1217px, #c0602f 1568px, #c0853d 1573px, #c4702f 1780px, #be4c2a 2000px, #ba4228 2520px, #c4572c 2527px, #c25a2d 2636px, #c8803c 2644px, #c8803a 2900px, #c4602f 3200px, #cc5a2c 3584px); }
    browser-window { position: relative; }
    mac-dock { position: relative; margin-top: 12px; }
  `;
  render() {
    return html`<div class="desktop"><menu-bar></menu-bar><browser-window></browser-window><mac-dock></mac-dock></div>`;
  }
}
